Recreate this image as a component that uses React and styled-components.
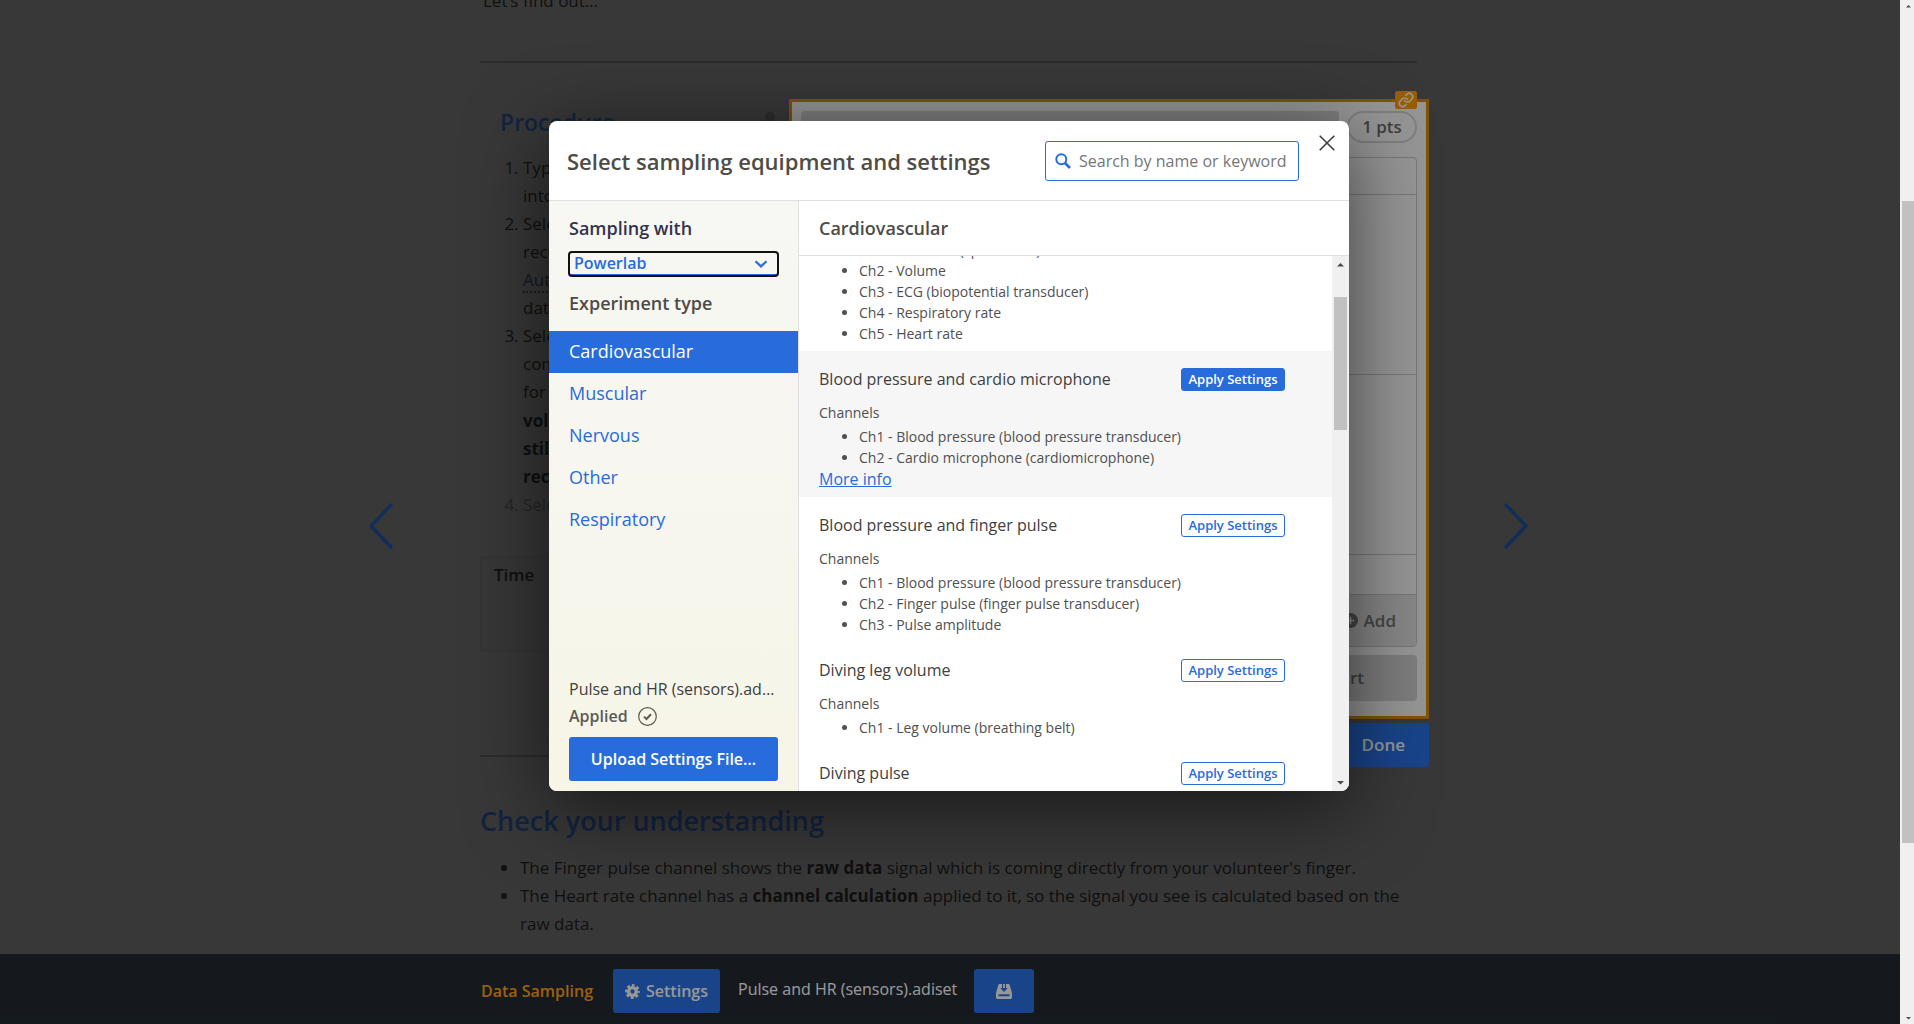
import React, { useLayoutEffect, useRef } from "react";
import styled, { createGlobalStyle, css } from "styled-components";

const blue = "#286cdb";
const line = "#e0e0e0";

const GlobalStyle = createGlobalStyle`
  *, *::before, *::after { box-sizing: border-box; }
  body {
    margin: 0;
    background: #595959;
    font-family: "Open Sans", "Noto Sans", sans-serif;
    font-size: 16px;
    color: #404040;
  }
  button, input, select { font: inherit; }
  h1, h2, h3, p, ul, ol { margin: 0; padding: 0; }
`;

/* ---------- Shell ---------- */

const Shell = styled.div`
  position: relative;
  display: flex;
  height: 100vh;
  overflow: hidden;
`;

const PageArea = styled.div`
  flex: 1;
  min-width: 0;
  display: flex;
  flex-direction: column;
`;

const Main = styled.main`
  flex: 1;
  min-height: 0;
  display: flex;
  justify-content: center;
  padding-right: 3px;
  color: #1a1a1a;
`;

const PageArrow = styled.button`
  flex: none;
  align-self: center;
  margin-top: 98px;
  padding: 0;
  border: 0;
  background: none;
  color: #1b4a8e;
  svg { display: block; }
`;

const Article = styled.div`
  flex: 0 1 949px;
  margin: 0 75px 0 87px;
  overflow-y: auto;
  scrollbar-width: none;
  padding: 20px 12px 60px 0;
  font-size: 17px;
  line-height: 28px;
`;

const Intro = styled.p`
  padding-left: 3px;
`;

const Rule = styled.hr`
  height: 2px;
  margin: ${(p) => p.$top} 0 ${(p) => p.$bottom};
  border: 0;
  background: #474747;
`;

/* ---------- Procedure ---------- */

const Activity = styled.section`
  display: grid;
  grid-template-columns: minmax(0, 1fr) 640px;
  margin-right: -12px;
`;

const Procedure = styled.div`
  padding-top: 7px;
`;

const ProcedureHead = styled.div`
  display: flex;
  justify-content: space-between;
  padding: 0 14px 0 20px;
`;

const ProcedureTitle = styled.h2`
  font-size: 23px;
  line-height: 32px;
  font-weight: 600;
  color: #1f3864;
`;

const ScrollDot = styled.span`
  width: 10px;
  height: 10px;
  margin-top: 6px;
  border-radius: 50%;
  background: #484848;
`;

const Steps = styled.ol`
  margin: 16px 0 37px 43px;
  li:last-child { color: #3d3d3d; }
  b { display: block; padding-top: 1px; }
  abbr {
    text-decoration: none;
    border-bottom: 2px dotted #2c3340;
    color: #1f2a3d;
  }
`;

const TimeBox = styled.div`
  height: 96px;
  padding: 4px 13px;
  border: 1px solid #525252;
  border-radius: 4px;
  background: #575757;
  font-weight: 600;
`;

const Panel = styled.div`
  position: relative;
  display: flex;
  flex-direction: column;
  height: 620px;
  padding: 9px 9px 15px;
  border: 3px solid #c98508;
  background: #ececec;
  color: #666;
  font-weight: 600;
`;

const LinkBadge = styled.button`
  position: absolute;
  top: -11px;
  right: 9px;
  display: grid;
  place-items: center;
  width: 22px;
  height: 18px;
  padding: 0;
  border: 0;
  border-radius: 2px;
  background: #f39200;
  color: #f5e8d0;
`;

const PanelHead = styled.div`
  display: flex;
  gap: 8px;
  height: 32px;
  margin-bottom: 14px;
`;

const TitleBar = styled.div`
  flex: 1;
  border-radius: 4px;
  background: #c8c8c8;
`;

const Points = styled.div`
  width: 70px;
  border: 2px solid #c8c8c8;
  border-radius: 16px;
  line-height: 28px;
  text-align: center;
`;

const Sheet = styled.div`
  display: grid;
  grid-template-rows: 37px 180px 180px 40px 1fr;
  height: 490px;
  border: 1px solid #bebebe;
  border-radius: 4px;
  overflow: hidden;
`;

const SheetRow = styled.div`
  border-bottom: 1px solid #bebebe;
`;

const SheetFoot = styled.div`
  display: flex;
  align-items: center;
  justify-content: flex-end;
  padding-right: 20px;
  background: #d6d6d6;
`;

const AddButton = styled.button`
  display: flex;
  align-items: center;
  gap: 6px;
  padding: 0;
  border: 0;
  background: none;
  color: #707070;
  font-weight: 600;
`;

const StartButton = styled.button`
  align-self: flex-end;
  width: 146px;
  height: 46px;
  margin-top: 8px;
  border: 0;
  border-radius: 4px;
  background: #c6c6c6;
  color: #666;
  font-weight: 600;
`;

const DoneButton = styled.button`
  position: absolute;
  top: calc(100% + 7px);
  right: -3px;
  height: 44px;
  padding: 0 24px;
  border: 0;
  border-radius: 3px;
  background: ${blue};
  color: #f0f0f0;
  font-weight: 600;
`;

const SectionTitle = styled.h2`
  margin-bottom: 13px;
  font-size: 27px;
  line-height: 40px;
  font-weight: 600;
  color: #1f3864;
`;

const Notes = styled.ul`
  padding-left: 40px;
  padding-bottom: 120px;
`;

/* ---------- Bottom bar ---------- */

const BottomBar = styled.footer`
  display: flex;
  align-items: center;
  height: 70px;
  padding-top: 4px;
  padding-left: calc(50% - 469px);
  background: #222930;
  color: #f5f5f5;
`;

const BarLabel = styled.span`
  width: 132px;
  color: #f39c12;
  font-weight: 600;
`;

const BarButton = styled.button`
  display: flex;
  align-items: center;
  justify-content: center;
  gap: 6px;
  width: ${(p) => p.$width};
  height: 44px;
  padding: 0;
  border: 0;
  border-radius: 3px;
  background: ${blue};
  color: #f0f0f0;
  font-weight: 600;
`;

const BarFile = styled.span`
  margin: 0 17px 4px 18px;
`;

/* ---------- Scroll bars ---------- */

const Track = styled.div`
  flex: none;
  display: flex;
  flex-direction: column;
  width: ${(p) => p.$width};
  overflow: hidden;
  background: #f0f0f0;
`;

const Thumb = styled.div`
  flex: none;
  width: 13px;
  height: ${(p) => p.$size};
  margin: ${(p) => p.$start} 0 auto 2px;
  background: #c1c1c1;
`;

const TrackArrow = styled.svg`
  flex: none;
  width: 17px;
  height: ${(p) => (p.$short ? "12px" : "17px")};
  fill: #4a4a4a;
`;

/* ---------- Dialog ---------- */

const Backdrop = styled.div`
  position: absolute;
  inset: 0 14px 0 0;
  display: flex;
  align-items: center;
  justify-content: center;
  padding: 0 2px 112px 0;
  background: rgba(0, 0, 0, 0.37);
`;

const Dialog = styled.div`
  position: relative;
  display: flex;
  flex-direction: column;
  width: 800px;
  height: 670px;
  border-radius: 8px;
  overflow: hidden;
  background: #fff;
  box-shadow: 0 16px 80px rgba(0, 0, 0, 0.6);
`;

const DialogHead = styled.header`
  display: flex;
  align-items: center;
  justify-content: space-between;
  height: 80px;
  padding: 0 50px 0 18px;
  border-bottom: 1px solid ${line};
`;

const DialogTitle = styled.h1`
  font-size: 22px;
  line-height: 32px;
  font-weight: 600;
  color: #4d4c47;
`;

const SearchBox = styled.label`
  display: flex;
  align-items: center;
  gap: 8px;
  width: 254px;
  height: 40px;
  padding: 1px 0 0 9px;
  border: 1px solid ${blue};
  border-radius: 3px;
  color: ${blue};
  svg { flex: none; }
`;

const SearchInput = styled.input`
  width: 100%;
  min-width: 0;
  padding: 0;
  border: 0;
  outline: 0;
  background: none;
  font-size: 16px;
  color: #404040;
  &::placeholder { color: #767676; opacity: 1; }
`;

const CloseButton = styled.button`
  position: absolute;
  top: 14px;
  right: 14px;
  padding: 0;
  border: 0;
  background: none;
  color: #404040;
  svg { display: block; }
`;

const DialogBody = styled.div`
  flex: 1;
  min-height: 0;
  display: grid;
  grid-template-columns: 250px minmax(0, 1fr);
`;

const Sidebar = styled.aside`
  display: flex;
  flex-direction: column;
  padding: 13px 0 10px;
  border-right: 1px solid ${line};
  background: linear-gradient(#f7f7f3, #f7f6ef 50%, #f6f5e6);
`;

const groupTitle = css`
  padding: 0 20px;
  font-size: 18px;
  line-height: 28px;
  font-weight: 600;
`;

const SelectLabel = styled.label`
  ${groupTitle}
  color: #33334a;
`;

const GroupTitle = styled.h2`
  ${groupTitle}
  color: #4d4c47;
`;

const SelectWrap = styled.div`
  display: grid;
  align-items: center;
  margin: 10px 20px 13px;
  > * { grid-area: 1 / 1; }
  svg { justify-self: end; margin-right: 10px; pointer-events: none; }
`;

const Select = styled.select`
  appearance: none;
  width: 100%;
  height: 24px;
  padding: 0 5px;
  border: 0;
  border-bottom: 2px solid ${blue};
  outline: 2px solid #101010;
  outline-offset: -1px;
  border-radius: 3px;
  background: transparent;
  color: ${blue};
  font-weight: 600;
  line-height: 20px;
`;

const TypeList = styled.nav`
  display: flex;
  flex-direction: column;
  flex: 1;
  margin-top: 14px;
`;

const TypeLink = styled.a`
  height: 42px;
  padding: 0 20px;
  font-size: 18px;
  line-height: 41px;
  text-decoration: none;
  color: ${(p) => (p.$active ? "#fff" : blue)};
  background: ${(p) => (p.$active ? blue : "transparent")};
`;

const FileStatus = styled.div`
  padding: 0 20px;
  line-height: 27px;
`;

const FileName = styled.p`
  overflow: hidden;
  white-space: nowrap;
  text-overflow: ellipsis;
`;

const Applied = styled.p`
  display: flex;
  align-items: center;
  gap: 10px;
  margin-bottom: 7px;
  font-weight: 600;
  color: #5c5b54;
`;

const UploadButton = styled.button`
  width: 100%;
  height: 44px;
  padding: 0;
  border: 0;
  border-radius: 3px;
  background: ${blue};
  color: #fff;
  font-weight: 600;
`;

const Results = styled.section`
  display: flex;
  flex-direction: column;
  min-height: 0;
`;

const ResultsTitle = styled.h2`
  ${groupTitle}
  flex: none;
  height: 55px;
  line-height: 54px;
  border-bottom: 1px solid ${line};
  color: #4d4c47;
`;

const ResultsBody = styled.div`
  flex: 1;
  min-height: 0;
  display: flex;
`;

const ResultList = styled.div`
  flex: 1;
  overflow-y: auto;
  scrollbar-width: none;
`;

const Result = styled.article`
  padding: 16px 47px 7px 20px;
  background: ${(p) => (p.$active ? "#f6f6f6" : "#fff")};
`;

const ResultHead = styled.div`
  display: flex;
  align-items: center;
  justify-content: space-between;
  height: 24px;
  margin-bottom: 11px;
`;

const ResultTitle = styled.h3`
  font-size: 16px;
  line-height: 24px;
  font-weight: 400;
`;

const ApplyButton = styled.button`
  width: 104px;
  height: 23px;
  padding: 0;
  border: 1px solid ${blue};
  border-radius: 3px;
  font-size: 13px;
  line-height: 20px;
  font-weight: 600;
  background: ${(p) => (p.$active ? blue : "#fff")};
  color: ${(p) => (p.$active ? "#fff" : blue)};
`;

const ChannelsLabel = styled.p`
  font-size: 14px;
  line-height: 22px;
  color: #505050;
`;

const Channels = styled.ul`
  && { margin-top: 2px; }
  padding-left: 40px;
  font-size: 14px;
  line-height: 21px;
  color: #505050;
`;

const MoreInfo = styled.a`
  display: block;
  width: max-content;
  line-height: 22px;
  color: ${blue};
`;

/* ---------- Data ---------- */

const types = ["Cardiovascular", "Muscular", "Nervous", "Other", "Respiratory"];

const results = [
  {
    title: "Breathing and heart rate",
    channels: [
      "Ch1 - Flow rate (spirometer)",
      "Ch2 - Volume",
      "Ch3 - ECG (biopotential transducer)",
      "Ch4 - Respiratory rate",
      "Ch5 - Heart rate",
    ],
  },
  {
    title: "Blood pressure and cardio microphone",
    active: true,
    channels: [
      "Ch1 - Blood pressure (blood pressure transducer)",
      "Ch2 - Cardio microphone (cardiomicrophone)",
    ],
  },
  {
    title: "Blood pressure and finger pulse",
    channels: [
      "Ch1 - Blood pressure (blood pressure transducer)",
      "Ch2 - Finger pulse (finger pulse transducer)",
      "Ch3 - Pulse amplitude",
    ],
  },
  { title: "Diving leg volume", channels: ["Ch1 - Leg volume (breathing belt)"] },
  { title: "Diving pulse", channels: ["Ch1 - Pulse (finger pulse transducer)"] },
];

/* ---------- Icons ---------- */

const Chevron = ({ flip }) => (
  <svg width="24" height="46" viewBox="0 0 24 46" fill="none" stroke="currentColor" strokeWidth="3.4" strokeLinecap="round" strokeLinejoin="round">
    <path d={flip ? "M2 2 L22 23 L2 44" : "M22 2 L2 23 L22 44"} />
  </svg>
);

const LinkIcon = () => (
  <svg width="16" height="16" viewBox="0 0 24 24" fill="none" stroke="currentColor" strokeWidth="2.6" strokeLinecap="round" strokeLinejoin="round">
    <path d="M10 13a5 5 0 0 0 7.54.54l3-3a5 5 0 0 0-7.07-7.07l-1.72 1.71" />
    <path d="M14 11a5 5 0 0 0-7.54-.54l-3 3a5 5 0 0 0 7.07 7.07l1.71-1.71" />
  </svg>
);

const PlusIcon = () => (
  <svg width="15" height="15" viewBox="0 0 16 16">
    <circle cx="8" cy="8" r="8" fill="currentColor" />
    <path d="M8 4v8M4 8h8" stroke="#dedede" strokeWidth="1.8" />
  </svg>
);

const GearIcon = () => (
  <svg width="15" height="15" viewBox="0 0 16 16">
    <circle cx="8" cy="8" r="4.1" fill="none" stroke="currentColor" strokeWidth="3.6" />
    <circle cx="8" cy="8" r="6.6" fill="none" stroke="currentColor" strokeWidth="2.6" strokeDasharray="3 2.18" strokeDashoffset="1.5" />
  </svg>
);

const SaveIcon = () => (
  <svg width="16" height="15" viewBox="0 0 16 15" fill="currentColor">
    <path fillRule="evenodd" d="M3.6 0H6v4H4.3L8 8l3.7-4H10V0h2.4c.6 0 1 .3 1.200.8L16 9v4.500c0 .8-.6 1.500-1.500 1.500h-13C.6 15 0 14.300 0 13.500V9L2.400.8C2.600.3 3 0 3.600 0z M2.500 10.300v2h11v-2z" />
    <path d="M7.100 0h1.800v4h-1.800z" />
  </svg>
);

const SearchIcon = () => (
  <svg width="16" height="16" viewBox="0 0 16 16" fill="none" stroke="currentColor">
    <circle cx="6.3" cy="6.3" r="5" strokeWidth="2" />
    <path d="M10 10l5 5" strokeWidth="2.6" />
  </svg>
);

const CloseIcon = () => (
  <svg width="16" height="16" viewBox="0 0 16 16" fill="none" stroke="currentColor" strokeWidth="1.6">
    <path d="M.7.7l14.6 14.6M15.3.7L.7 15.3" />
  </svg>
);

const DownIcon = () => (
  <svg width="14" height="8" viewBox="0 0 14 8" fill="none" stroke={blue} strokeWidth="2.2">
    <path d="M1.5 1.2L7 6.4l5.500-5.200" />
  </svg>
);

const CheckIcon = () => (
  <svg width="19" height="19" viewBox="0 0 19 19" fill="none" stroke="currentColor">
    <circle cx="9.5" cy="9.5" r="8.8" strokeWidth="1.2" />
    <path d="M6 9.6l2.500 2.400 4.500-4.800" strokeWidth="2" />
  </svg>
);

const UpArrow = (props) => (
  <TrackArrow viewBox="0 0 17 17" {...props}><path d="M5 10.500h7L8.500 7z" /></TrackArrow>
);
const DownArrow = (props) => (
  <TrackArrow viewBox="0 0 17 17" {...props}><path d="M5 7h7l-3.500 3.500z" /></TrackArrow>
);

/* ---------- App ---------- */

export default function App() {
  const article = useRef(null);
  const list = useRef(null);

  useLayoutEffect(() => {
    article.current.scrollTop = 33;
    list.current.scrollTop = 92;
  }, []);

  return (
    <>
      <GlobalStyle />
      <Shell>
        <PageArea>
          <Main>
            <PageArrow aria-label="Previous page"><Chevron /></PageArrow>
            <Article ref={article}>
              <Intro>Let’s find out…</Intro>
              <Rule $top="46px" $bottom="36px" />
              <Activity>
                <Procedure>
                  <ProcedureHead>
                    <ProcedureTitle>Procedure</ProcedureTitle>
                    <ScrollDot />
                  </ProcedureHead>
                  <Steps>
                    <li>Type<br />into</li>
                    <li>Select<br />record<br /><abbr>Auto</abbr><br />data</li>
                    <li>Select<br />complete<br />for<b>volunteer<br />still<br />record</b></li>
                    <li>Select</li>
                  </Steps>
                  <TimeBox>Time</TimeBox>
                </Procedure>
                <Panel>
                  <LinkBadge aria-label="Link"><LinkIcon /></LinkBadge>
                  <PanelHead>
                    <TitleBar />
                    <Points>1 pts</Points>
                  </PanelHead>
                  <Sheet>
                    <SheetRow />
                    <SheetRow />
                    <SheetRow />
                    <SheetRow />
                    <SheetFoot>
                      <AddButton><PlusIcon />Add</AddButton>
                    </SheetFoot>
                  </Sheet>
                  <StartButton>Start</StartButton>
                  <DoneButton>Done</DoneButton>
                </Panel>
              </Activity>
              <Rule $top="36px" $bottom="44px" />
              <SectionTitle>Check your understanding</SectionTitle>
              <Notes>
                <li>The Finger pulse channel shows the <b>raw data</b> signal which is coming directly from your volunteer's finger.</li>
                <li>The Heart rate channel has a <b>channel calculation</b> applied to it, so the signal you see is calculated based on the raw data.</li>
              </Notes>
            </Article>
            <PageArrow aria-label="Next page"><Chevron flip /></PageArrow>
          </Main>
          <BottomBar>
            <BarLabel>Data Sampling</BarLabel>
            <BarButton $width="107px"><GearIcon />Settings</BarButton>
            <BarFile>Pulse and HR (sensors).adiset</BarFile>
            <BarButton $width="60px" aria-label="Save"><SaveIcon /></BarButton>
          </BottomBar>
        </PageArea>
        <Track $width="14px">
          <UpArrow $short />
          <Thumb $start="189px" $size="642px" />
          <DownArrow $short />
        </Track>

        <Backdrop>
          <Dialog role="dialog" aria-labelledby="dialog-title">
            <DialogHead>
              <DialogTitle id="dialog-title">Select sampling equipment and settings</DialogTitle>
              <SearchBox>
                <SearchIcon />
                <SearchInput type="text" aria-label="Search" placeholder="Search by name or keyword" />
              </SearchBox>
              <CloseButton aria-label="Close"><CloseIcon /></CloseButton>
            </DialogHead>
            <DialogBody>
              <Sidebar>
                <SelectLabel htmlFor="device">Sampling with</SelectLabel>
                <SelectWrap>
                  <Select id="device" defaultValue="Powerlab">
                    <option>Powerlab</option>
                  </Select>
                  <DownIcon />
                </SelectWrap>
                <GroupTitle>Experiment type</GroupTitle>
                <TypeList>
                  {types.map((t, i) => (
                    <TypeLink key={t} href="#" $active={i === 0}>{t}</TypeLink>
                  ))}
                </TypeList>
                <FileStatus>
                  <FileName>Pulse and HR (sensors).adiset</FileName>
                  <Applied>Applied <CheckIcon /></Applied>
                  <UploadButton>Upload Settings File…</UploadButton>
                </FileStatus>
              </Sidebar>
              <Results>
                <ResultsTitle>Cardiovascular</ResultsTitle>
                <ResultsBody>
                  <ResultList ref={list}>
                    {results.map((r) => (
                      <Result key={r.title} $active={r.active}>
                        <ResultHead>
                          <ResultTitle>{r.title}</ResultTitle>
                          <ApplyButton $active={r.active}>Apply Settings</ApplyButton>
                        </ResultHead>
                        <ChannelsLabel>Channels</ChannelsLabel>
                        <Channels>
                          {r.channels.map((c) => <li key={c}>{c}</li>)}
                        </Channels>
                        {r.active && <MoreInfo href="#">More info</MoreInfo>}
                      </Result>
                    ))}
                  </ResultList>
                  <Track $width="17px">
                    <UpArrow />
                    <Thumb $start="24px" $size="133px" />
                    <DownArrow />
                  </Track>
                </ResultsBody>
              </Results>
            </DialogBody>
          </Dialog>
        </Backdrop>
      </Shell>
    </>
  );
}
